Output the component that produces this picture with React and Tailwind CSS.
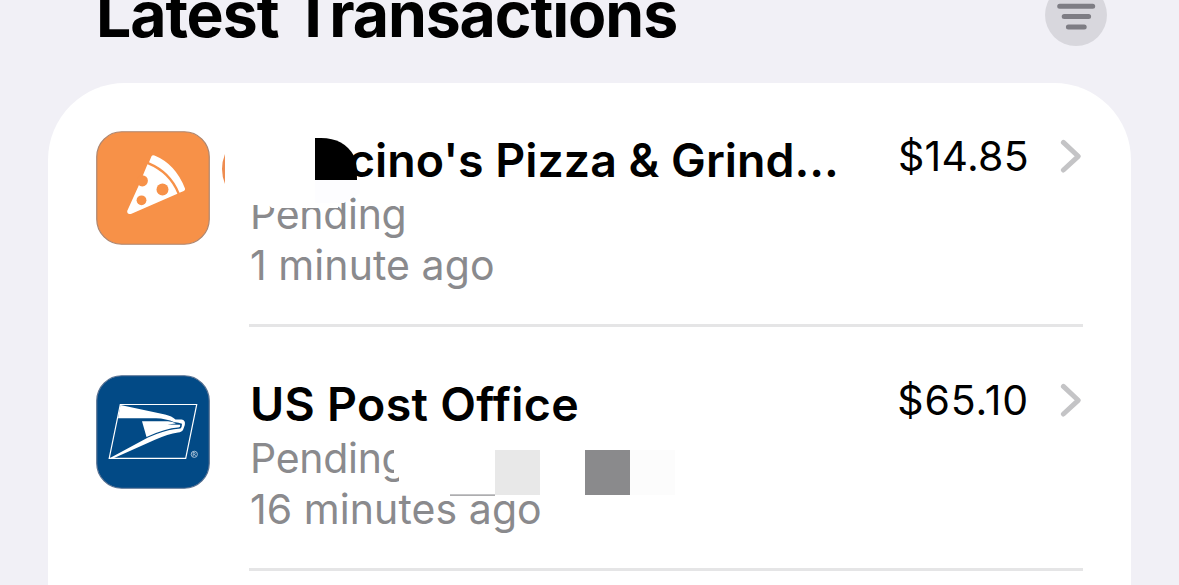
function PizzaIcon() {
  return (
    <svg viewBox="0 0 114 114" className="size-full">
      <rect x="0.75" y="0.75" width="112.5" height="112.5" rx="25" fill="#f79148" stroke="#ad8670" strokeWidth="1.2" />
      <path d="M55.5 25.2Q56.5 23.7 58.5 24.5Q79.5 33 89 57.5Q89.5 59.2 87.8 60L83.5 61.8Q75 40.5 53 31.3Z" fill="#fff" />
      <path d="M51.5 33.2Q73 42 81.4 62.7L35.5 82.7Q31 84 31.2 80L42.5 55Z" fill="#fff" />
      <circle cx="46.3" cy="49.8" r="5.6" fill="#f79148" />
      <circle cx="66.5" cy="58.5" r="6" fill="#f79148" />
      <circle cx="45.5" cy="69.3" r="4.9" fill="#f79148" />
    </svg>
  );
}

function PostIcon() {
  return (
    <svg viewBox="0 0 114 114" className="size-full">
      <rect x="0.75" y="0.75" width="112.5" height="112.5" rx="25" fill="#024a86" stroke="#5a7292" strokeWidth="1.2" />
      <path d="M24.3 29.5H100.7L89.7 83.3H13.2Z" fill="none" stroke="#fff" strokeWidth="1.2" />
      <path d="M24.5 30L69 39.5Q76 41 79.5 44.6H85.5Q89.8 45.2 88.8 50L87.2 54.5Q86 57 82 57.5Q72 59 59 64.8L17 83.5L14 83L52 62.5Q68 55.5 78 54.3L84.5 53.5Q86 52 86 48.7Q82 47 78.5 47.2Q70 43.6 60 43.3H22Z" fill="#fff" />
      <path d="M46 46.2H72Q77 46.5 80 48.5L71.5 49.5L84 49.8Q84.8 52.2 82 52.5Q70 53 50.5 62Z" fill="#fff" />
      <circle cx="98.3" cy="79.3" r="3.1" fill="none" stroke="#cddbe8" strokeWidth="0.8" />
      <path d="M97.2 81.2V77.5H98.6Q99.8 78.4 98.6 79.4H97.4M98.6 79.4L99.7 81.2" fill="none" stroke="#cddbe8" strokeWidth="0.7" />
    </svg>
  );
}

function Chevron() {
  return (
    <svg viewBox="0 0 22 36" className="mt-[55px] mr-px h-9 w-[22px] shrink-0">
      <path d="M3.4 4.4L18.2 18.3L3.4 32" fill="none" stroke="#c4c4c6" strokeWidth="5" strokeLinecap="round" strokeLinejoin="round" />
    </svg>
  );
}

function Row({ icon, title, titleClass, status, time, amount, amountClass, children }) {
  return (
    <div className="relative flex h-[244px] gap-[39px] pr-12 pl-12">
      <div className="mt-12 size-[114px] shrink-0">{icon}</div>
      <div className="flex min-w-0 flex-1 border-b-[3px] border-[#e5e5e6]">
        <div className="min-w-0 flex-1 pt-[49px] pl-px whitespace-nowrap">
          <div className={titleClass}>{title}</div>
          <div className="mt-px h-[51px] text-[41px] leading-[51px] tracking-[-0.3px] text-[#8a8a8d]">{status}</div>
          <div className="h-[51px] text-[41px] leading-[51px] tracking-[0.07px] text-[#8a8a8d]">{time}</div>
        </div>
        <div className={amountClass}>{amount}</div>
        <Chevron />
      </div>
      {children}
    </div>
  );
}

export default function App() {
  return (
    <div className="h-[585px] w-[1179px] overflow-hidden bg-[#f1f0f6] font-['Inter',sans-serif] text-black">
      <header className="flex h-[83px] justify-between pr-[72px] pl-[96px]">
        <h1 className="-mt-4 h-[60px] text-[62.5px] leading-[60px] font-bold tracking-[-1.1px] whitespace-nowrap">Latest Transactions</h1>
        <svg viewBox="0 0 62 62" className="-mt-4 size-[62px]">
          <circle cx="31" cy="31" r="31" fill="#d8d7dd" />
          <path d="M14.7 22.2H47.7M19.2 32.5H43.6M23.4 42.9H39.2" stroke="#7e7d84" strokeWidth="5" strokeLinecap="round" />
        </svg>
      </header>
      <main className="mx-12 h-[580px] rounded-t-[77px] bg-white">
        <Row
          icon={<PizzaIcon />}
          title="cino's Pizza & Grind..."
          titleClass="h-14 pl-[98px] text-[46.5px] leading-[56px] font-semibold tracking-[0px]"
          status="Pending"
          time="1 minute ago"
          amount="$14.85"
          amountClass="mt-[48px] mr-[31px] text-[41px] leading-[50px] tracking-[0.3px]"
        >
          <svg viewBox="0 0 200 80" className="absolute top-[50px] left-[172px] h-20 w-[200px]">
            <path d="M5 21Q-1 36 5 51Z" fill="#ee8c50" />
            <path d="M24 60H121V72H118V75H52L48 72H24Z" fill="#fff" />
            <path d="M95 47H140V60L124 70H95Z" fill="#fdfdff" />
            <path d="M95 5H101Q124 5 134 23Q137 29 137 47H95Z" fill="#000" />
          </svg>
        </Row>
        <Row
          icon={<PostIcon />}
          title="US Post Office"
          titleClass="h-14 text-[46.5px] leading-[56px] font-semibold tracking-[0.3px]"
          status="Pending"
          time="16 minutes ago"
          amount="$65.10"
          amountClass="mt-[48px] mr-[31px] text-[41px] leading-[50px] tracking-[0.9px]"
        >
          <svg viewBox="0 0 290 60" className="absolute top-[113px] left-[342px] h-[60px] w-[290px]">
            <path d="M4 5H30V48H9V35H4Z" fill="#fff" />
            <rect x="60" y="54.5" width="45" height="1.2" fill="#8a8a8d" />
            <rect x="105" y="10" width="45" height="45" fill="#e8e8e8" />
            <rect x="195" y="10" width="45" height="45" fill="#8a8a8c" />
            <rect x="240" y="10" width="45" height="45" fill="#fcfcfc" />
          </svg>
        </Row>
      </main>
    </div>
  );
}
